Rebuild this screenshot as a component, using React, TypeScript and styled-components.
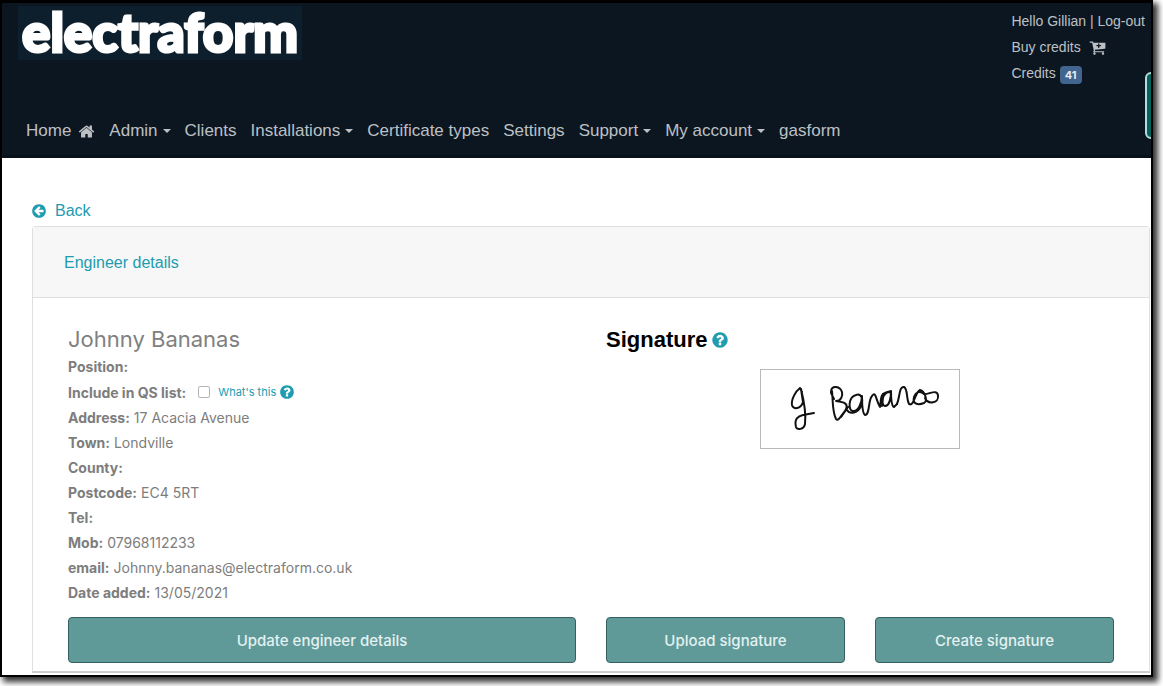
import React from "react";
import styled, { createGlobalStyle } from "styled-components";

const helvetica = '"Liberation Sans", Arial, sans-serif';
const system = 'Inter, "Liberation Sans", sans-serif';
const teal = "#209cb0";

const GlobalStyle = createGlobalStyle`
  *, *::before, *::after { box-sizing: border-box; }
  body { margin: 0; background: #fff; font-family: ${helvetica}; font-size: 16px; line-height: 24px; }
  a { color: inherit; text-decoration: none; }
  svg { display: block; flex: none; }
`;

const Page = styled.div`
  display: flex;
  min-height: 100vh;
  padding: 0 10px 10px 0;
`;

const Shadow = styled.div`
  display: flex;
  flex: 1;
  min-width: 0;
  box-shadow: 4px 4px 6px 1px rgba(0, 0, 0, 0.8);
`;

const Frame = styled.div`
  position: relative;
  flex: 1;
  min-width: 0;
  overflow: hidden;
  background: #fff;
  border: 2px solid #000;
  border-top-width: 3px;
`;

const Header = styled.header`
  background: #0c1621;
  border-bottom: 3px solid #08101c;
  color: #bcc0c4;
`;

const TopBar = styled.div`
  display: flex;
  justify-content: space-between;
  align-items: flex-start;
  height: 106px;
  padding: 3px 6px 0 16px;
`;

const Logo = styled.a`
  width: 284px;
  height: 54px;
  padding-left: 4px;
  background: #0d1f2d;
  color: #fff;
  font: 900 53px/52px Lato, sans-serif;
  -webkit-text-stroke: 3px #fff;
`;

const Account = styled.div`
  display: flex;
  flex-direction: column;
  padding-top: 2px;
  font: 14px/26px ${helvetica};
`;

const AccountLine = styled.div`
  display: flex;
  align-items: center;
  gap: 4px;
  white-space: nowrap;
`;

const CartLink = styled.a`
  display: flex;
  align-items: center;
  gap: 8px;
`;

const Badge = styled.span`
  margin-top: 3px;
  padding: 0 5px;
  border-radius: 4px;
  background: #41658f;
  color: #e4ebf2;
  font: 700 11px/18px ${system};
`;

const Nav = styled.nav`
  display: flex;
  padding: 9px 17px 11px;
`;

const NavLink = styled.a<{ $menu?: boolean }>`
  display: flex;
  align-items: center;
  gap: 7px;
  padding: 0 7px;
  font-size: 17px;
  line-height: 26px;
  white-space: nowrap;

  ${({ $menu }) => $menu && `
    gap: 5px;
    &::after {
      content: "";
      border: 4px solid transparent;
      border-top-color: currentColor;
      border-bottom: 0;
    }
  `}
`;

const HelpTab = styled.button`
  position: absolute;
  top: 69px;
  right: -20px;
  width: 26px;
  height: 67px;
  padding: 0;
  border: 2px solid #b4dcd9;
  border-radius: 6px;
  background: #04625e;
`;

const Main = styled.main`
  padding: 41px 1px 2px 30px;
`;

const BackLink = styled.a`
  display: flex;
  width: fit-content;
  align-items: center;
  gap: 8px;
  margin-left: -1px;
  margin-bottom: 3px;
  color: ${teal};
`;

const Card = styled.section`
  border: 1px solid #dfdfdf;
  border-bottom: 2px solid #ccc;
  border-radius: 4px 4px 0 0;
`;

const CardHeader = styled.div`
  padding: 24px 31px 22px;
  border-bottom: 1px solid #dfdfdf;
  background: #f7f7f7;
  color: ${teal};
`;

const CardBody = styled.div`
  display: grid;
  grid-template-columns: 1fr 1fr;
  gap: 12px 30px;
  padding: 26px 35px 8px;
`;

const Name = styled.h2`
  margin: 0;
  color: #808080;
  font: 400 22px/30px ${system};
`;

const Details = styled.dl`
  margin: 0;
  color: #7d7d7d;
  font: 14px/25px ${system};
`;

const Detail = styled.div<{ $tall?: boolean }>`
  display: flex;
  align-items: center;
  gap: 4px;
  height: ${({ $tall }) => ($tall ? 26 : 25)}px;

  dt { font-weight: 700; }
  dd { display: flex; align-items: center; margin: 0; }
`;

const Checkbox = styled.input`
  appearance: none;
  width: 12px;
  height: 12px;
  margin: 0 8px;
  border: 1px solid #b5b5b5;
  border-radius: 2px;
  background: #fff;
`;

const HelpLink = styled.a`
  display: flex;
  align-items: center;
  gap: 3px;
  color: ${teal};
  font-size: 11px;
`;

const SignatureTitle = styled.h2`
  display: flex;
  align-items: center;
  gap: 4px;
  margin: 0;
  padding-top: 2px;
  color: #000;
  font: 700 22px/28px ${helvetica};

  a { color: ${teal}; }
`;

const SignatureBox = styled.div`
  width: 200px;
  height: 80px;
  margin: 15px auto 0;
  border: 1px solid #b9b9b9;
`;

const Actions = styled.div`
  display: grid;
  grid-auto-flow: column;
  grid-auto-columns: 1fr;
  gap: 30px;
`;

const ActionButton = styled.button`
  height: 46px;
  padding: 1px 12px 0;
  border: 1px solid #365f61;
  border-radius: 4px;
  background: #5f9a99;
  color: #e3f1f1;
  font: 500 15px/24px ${system};
`;

const icons = {
  home: "M1472 992v480q0 26-19 45t-45 19h-384v-384h-256v384h-384q-26 0-45-19t-19-45v-480q0-1 .5-3t.5-3l575-474 575 474q1 2 1 6zm223-69l-62 74q-8 9-21 11h-3q-13 0-21-7l-692-577-692 577q-12 8-24 7-13-2-21-11l-62-74q-8-10-7-23.5t11-21.5l719-599q32-26 76-26t76 26l244 204v-195q0-14 9-23t23-9h192q14 0 23 9t9 23v408l219 182q10 8 11 21.5t-7 23.5z",
  back: "M1408 960v-128q0-26-19-45t-45-19h-502l189-189q19-19 19-45t-19-45l-91-91q-18-18-45-18t-45 18l-362 362-91 91q-18 18-18 45t18 45l91 91 362 362q18 18 45 18t45-18l91-91q18-18 18-45t-18-45l-189-189h502q26 0 45-19t19-45zm256-64q0 209-103 385.5t-279.5 279.5-385.5 103-385.5-103-279.5-279.5-103-385.5 103-385.5 279.5-279.5 385.5-103 385.5 103 279.5 279.5 103 385.5z",
  question: "M1024 1376v-192q0-14-9-23t-23-9h-192q-14 0-23 9t-9 23v192q0 14 9 23t23 9h192q14 0 23-9t9-23zm256-672q0-88-55.5-163t-138.5-116-170-41q-243 0-371 213-15 24 8 42l132 100q7 6 19 6 16 0 25-12 53-68 86-92 34-24 86-24 48 0 85.5 26t37.5 59q0 38-20 61t-68 45q-63 28-115.5 86.5t-52.5 125.5v36q0 14 9 23t23 9h192q14 0 23-9t9-23q0-19 21.5-49.5t54.5-49.5q32-18 49-28.5t46-35 44.5-48 28-60.5 12.5-81zm384 192q0 209-103 385.5t-279.5 279.5-385.5 103-385.5-103-279.5-279.5-103-385.5 103-385.5 279.5-279.5 385.5-103 385.5 103 279.5 279.5 103 385.5z",
  cart: "M1280 704q0-26-19-45t-45-19h-128v-128q0-26-19-45t-45-19-45 19-19 45v128h-128q-26 0-45 19t-19 45 19 45 45 19h128v128q0 26 19 45t45 19 45-19 19-45v-128h128q26 0 45-19t19-45zm-576 832q0 53-37.5 90.5t-90.5 37.5-90.5-37.5-37.5-90.5 37.5-90.5 90.5-37.5 90.5 37.5 37.5 90.5zm896 0q0 53-37.5 90.5t-90.5 37.5-90.5-37.5-37.5-90.5 37.5-90.5 90.5-37.5 90.5 37.5 37.5 90.5zm128-1088v512q0 24-16 42.5t-41 21.5l-1044 122q1 7 4.5 21.5t6 26.5 2.5 22q0 16-24 64h920q26 0 45 19t19 45-19 45-45 19h-1024q-26 0-45-19t-19-45q0-14 11-39.5t29.5-59.5 20.5-38l-177-823h-204q-26 0-45-19t-19-45 19-45 45-19h256q16 0 28.5 6.5t20 15.5 13 24.5 7.5 26.5 5.5 29.5 4.5 25.5h1201q26 0 45 19t19 45z",
};

function Icon({ name, size = 16 }: { name: keyof typeof icons; size?: number }) {
  return (
    <svg width={size} height={size} viewBox="0 0 1792 1792" fill="currentColor" aria-hidden="true">
      <path d={icons[name]} />
    </svg>
  );
}

const navItems: { label: string; menu?: boolean; home?: boolean }[] = [
  { label: "Home", home: true },
  { label: "Admin", menu: true },
  { label: "Clients" },
  { label: "Installations", menu: true },
  { label: "Certificate types" },
  { label: "Settings" },
  { label: "Support", menu: true },
  { label: "My account", menu: true },
  { label: "gasform" },
];

const contact = [
  ["Address:", "17 Acacia Avenue"],
  ["Town:", "Londville"],
  ["County:", ""],
  ["Postcode:", "EC4 5RT"],
  ["Tel:", ""],
  ["Mob:", "07968112233"],
  ["email:", "Johnny.bananas@electraform.co.uk"],
  ["Date added:", "13/05/2021"],
];

function Signature() {
  return (
    <svg width="198" height="78" viewBox="761 370 198 78" fill="none" stroke="#111" strokeWidth="2" strokeLinecap="round" strokeLinejoin="round" role="img" aria-label="Signature of Johnny Bananas">
      <path d="M802 392 L800 388 C796 391 791 399 792 405 C793 410 801 409 803 402 L801 389 C804 401 806 415 805 424 C804 430 797 430 796 427 C794 419 798 416 803 415 L814 413" />
      <path d="M832 391 C833 399 832 411 836 419 C838 422 841 416 845 411 C850 403 843 402 836 401 C841 401 843 396 842 392 C840 386 832 385 831 391 C830 394 833 396 834 399" />
      <path d="M841 417 L848 407 M847 410 C850 415 858 413 861 406 C864 399 861 393 856 395 C848 397 848 411 853 411 C858 412 862 403 862 396 C862 402 862 413 865 415 C870 415 868 400 872 396 C876 390 876 401 880 407 C881 403 880 394 885 393 C889 391 891 391 891 392 C882 391 880 405 885 406 C890 406 891 396 891 391 C891 396 891 406 894 407 L897 404" />
      <path d="M883 394 L882 406 M897 404 C900 397 899 386 904 387 C908 389 906 398 909 404 C914 407 915 392 920 390 C925 391 928 401 924 403 C919 405 912 405 914 397 C916 391 921 391 924 394 C928 395 938 388 938 396 C939 403 928 405 925 398" />
    </svg>
  );
}

export default function App() {
  return (
    <>
      <GlobalStyle />
      <Page>
        <Shadow>
          <Frame>
            <Header>
              <TopBar>
                <Logo href="#">electraform</Logo>
                <Account>
                  <AccountLine>
                    <span>Hello Gillian | <a href="#">Log-out</a></span>
                  </AccountLine>
                  <AccountLine>
                    <CartLink href="#">Buy credits <Icon name="cart" size={17} /></CartLink>
                  </AccountLine>
                  <AccountLine>
                    Credits <Badge>41</Badge>
                  </AccountLine>
                </Account>
              </TopBar>
              <Nav>
                {navItems.map((item) => (
                  <NavLink key={item.label} href="#" $menu={item.menu}>
                    {item.label}
                    {item.home && <Icon name="home" size={17} />}
                  </NavLink>
                ))}
              </Nav>
            </Header>
            <HelpTab aria-label="Help" />
            <Main>
              <BackLink href="#"><Icon name="back" /> Back</BackLink>
              <Card>
                <CardHeader><a href="#">Engineer details</a></CardHeader>
                <CardBody>
                  <div>
                    <Name>Johnny Bananas</Name>
                    <Details>
                      <Detail><dt>Position:</dt></Detail>
                      <Detail $tall>
                        <dt><label htmlFor="qs-list">Include in QS list:</label></dt>
                        <dd>
                          <Checkbox id="qs-list" type="checkbox" />
                          <HelpLink href="#">What's this <Icon name="question" /></HelpLink>
                        </dd>
                      </Detail>
                      {contact.map(([label, value]) => (
                        <Detail key={label}><dt>{label}</dt>{value && <dd>{value}</dd>}</Detail>
                      ))}
                    </Details>
                  </div>
                  <div>
                    <SignatureTitle>
                      Signature <a href="#" aria-label="About signatures"><Icon name="question" size={18} /></a>
                    </SignatureTitle>
                    <SignatureBox><Signature /></SignatureBox>
                  </div>
                  <Actions><ActionButton>Update engineer details</ActionButton></Actions>
                  <Actions>
                    <ActionButton>Upload signature</ActionButton>
                    <ActionButton>Create signature</ActionButton>
                  </Actions>
                </CardBody>
              </Card>
            </Main>
          </Frame>
        </Shadow>
      </Page>
    </>
  );
}
